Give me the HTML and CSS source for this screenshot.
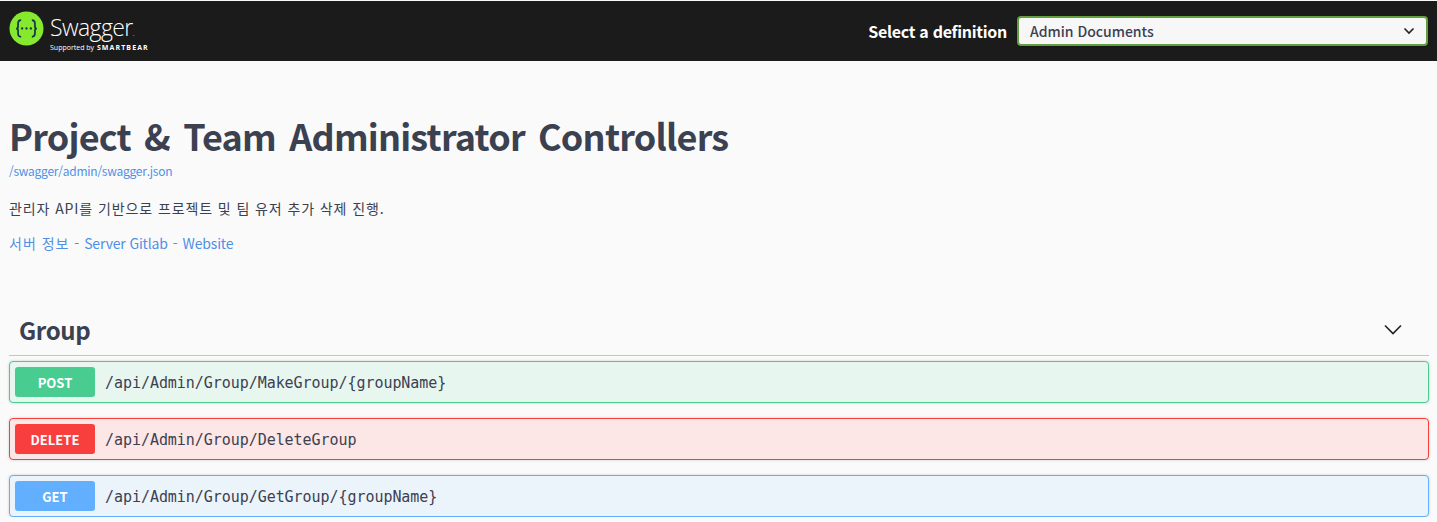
FILE: index.html
```html
<!DOCTYPE html>
<html lang="ko">
<head>
    <meta charset="UTF-8">
    <meta name="viewport" content="width=device-width, initial-scale=1.0">
    <title>Swagger UI</title>
    <link rel="stylesheet" href="styles.css">
</head>
<body>
    <header class="topbar">
        <a class="logo" href="#">
            <svg class="logo-mark" width="35" height="35" viewBox="0 0 36 36" aria-hidden="true">
                <circle cx="18" cy="18" r="17.500" fill="#85ea2d"/>
                <path d="M12.500 9.500c-3 0-3.200 1.600-3.200 3.600v3c0 1.300-.8 1.900-2 1.900 1.200 0 2 .6 2 1.900v3c0 2 .2 3.600 3.200 3.600" fill="none" stroke="#173647" stroke-width="1.800"/>
                <path d="M23.500 9.500c3 0 3.200 1.600 3.200 3.600v3c0 1.300.8 1.900 2 1.900-1.200 0-2 .6-2 1.900v3c0 2-.2 3.600-3.200 3.600" fill="none" stroke="#173647" stroke-width="1.800"/>
                <circle cx="13.500" cy="18" r="1.200" fill="#173647"/>
                <circle cx="18" cy="18" r="1.200" fill="#173647"/>
                <circle cx="22.500" cy="18" r="1.200" fill="#173647"/>
            </svg>
            <span class="logo-text">
                <span class="logo-name">Swagger<small>.</small></span>
                <span class="logo-sub">Supported by <b>SMARTBEAR</b></span>
            </span>
        </a>
        <div class="definition">
            <label class="definition-label">Select a definition</label>
            <div class="select">
                <span>Admin Documents</span>
                <svg width="12" height="8" viewBox="0 0 12 8" aria-hidden="true">
                    <path d="M1.500 1.500 6 6l4.500-4.500" fill="none" stroke="#222" stroke-width="1.600"/>
                </svg>
            </div>
        </div>
    </header>

    <main class="wrapper">
        <section class="info">
            <h1>Project &amp; Team Administrator Controllers</h1>
            <a class="spec-link" href="#">/swagger/admin/swagger.json</a>
            <p class="desc">관리자 API를 기반으로 프로젝트 및 팀 유저 추가 삭제 진행.</p>
            <p class="links"><a class="ko" href="#">서버 정보</a> - <a href="#">Server Gitlab</a> - <a href="#">Website</a></p>
        </section>

        <section class="tag">
            <div class="tag-head">
                <h3>Group</h3>
                <svg width="20" height="20" viewBox="0 0 20 20" aria-hidden="true">
                    <path d="M2 5.500 10 13.500 18 5.500" fill="none" stroke="#222" stroke-width="1.600"/>
                </svg>
            </div>
            <div class="ops">
                <div class="op op-post"><span class="method">POST</span><span class="path">/api/Admin/Group/MakeGroup/{groupName}</span></div>
                <div class="op op-delete"><span class="method">DELETE</span><span class="path">/api/Admin/Group/DeleteGroup</span></div>
                <div class="op op-get"><span class="method">GET</span><span class="path">/api/Admin/Group/GetGroup/{groupName}</span></div>
            </div>
        </section>
    </main>
</body>
</html>
```

FILE: styles.css
```css
* {
    margin: 0;
    padding: 0;
    box-sizing: border-box;
}

body {
    font-family: "Noto Sans CJK KR", "Open Sans", sans-serif;
    background: #fafafa;
    color: #3b4151;
    padding-top: 1px;
    overflow: hidden;
}

a {
    color: #4f90e6;
    text-decoration: none;
}

.topbar {
    height: 60px;
    background: #1b1b1b;
    display: flex;
    align-items: center;
    justify-content: space-between;
    padding: 0 9px;
}

.logo {
    display: flex;
    align-items: center;
    gap: 6px;
    color: #fff;
    margin-top: -6px;
}

.logo-text {
    display: flex;
    flex-direction: column;
    margin-top: 8px;
}

.logo-name {
    font-family: "Open Sans", sans-serif;
    font-weight: 300;
    font-size: 23px;
    line-height: 24px;
    letter-spacing: -0.6px;
    padding-top: 2px;
}

.logo-name small {
    font-size: 8px;
}

.logo-sub {
    font-family: "Open Sans", sans-serif;
    font-size: 7px;
    line-height: 9px;
    margin-top: -2px;
    white-space: nowrap;
}

.logo-sub b {
    letter-spacing: 1.100px;
    font-size: 7px;
    margin-left: 1px;
}

.definition {
    display: flex;
    align-items: center;
    gap: 10px;
}

.definition-label {
    color: #fff;
    font-size: 16px;
    font-weight: 700;
    letter-spacing: -0.3px;
}

.select {
    width: 411px;
    height: 30px;
    border: 2px solid #62a03f;
    border-radius: 4px;
    background: #f7f7f7;
    display: flex;
    align-items: center;
    justify-content: space-between;
    padding: 0 11px 0 11px;
    font-size: 14px;
    font-weight: 500;
    box-shadow: 0 1px 2px rgba(0, 0, 0, 0.25);
}

.wrapper {
    padding: 0 8px 0 9px;
}

.info {
    padding-top: 48px;
}

.info h1 {
    font-size: 36px;
    font-weight: 700;
    line-height: 52px;
    letter-spacing: -0.8px;
    word-spacing: 4px;
    margin-bottom: 2px;
}

.spec-link {
    display: block;
    font-size: 12px;
    line-height: 16px;
    letter-spacing: -0.25px;
}

.desc {
    font-size: 14px;
    line-height: 20px;
    letter-spacing: 0.9px;
    margin-top: 19px;
}

.links {
    font-size: 14px;
    line-height: 20px;
    word-spacing: 1px;
    margin-top: 15px;
    color: #4f90e6;
}

.links a {
    word-spacing: 0;
    letter-spacing: -0.15px;
}

.links .ko {
    letter-spacing: 1px;
}

.tag {
    margin-top: 57px;
}

.tag-head {
    height: 46px;
    border-bottom: 1px solid #c4c4c4;
    display: flex;
    align-items: center;
    justify-content: space-between;
    padding: 0 26px 6px 10px;
}

.tag-head h3 {
    font-size: 24px;
    font-weight: 700;
    line-height: 40px;
    letter-spacing: -0.35px;
}

.ops {
    display: flex;
    flex-direction: column;
    gap: 15px;
    margin-top: 5px;
}

.op {
    height: 42px;
    display: flex;
    align-items: center;
    gap: 10px;
    padding: 0 5px;
    border: 1px solid;
    border-radius: 4px;
    box-shadow: 0 0 3px rgba(0, 0, 0, 0.19);
}

.method {
    width: 80px;
    height: 30px;
    border-radius: 3px;
    color: #fff;
    font-size: 13px;
    font-weight: 700;
    display: flex;
    align-items: center;
    justify-content: center;
}

.path {
    font-family: "DejaVu Sans Mono", monospace;
    font-size: 15px;
    letter-spacing: -0.05px;
    margin-top: 1px;
}

.op-post {
    background: #e8f6f0;
    border-color: #49cc90;
}

.op-post .method {
    background: #49cc90;
}

.op-delete {
    background: #fce6e6;
    border-color: #f93e3e;
}

.op-delete .method {
    background: #f93e3e;
}

.op-get {
    background: #ebf3fb;
    border-color: #61affe;
}

.op-get .method {
    background: #61affe;
}
```
